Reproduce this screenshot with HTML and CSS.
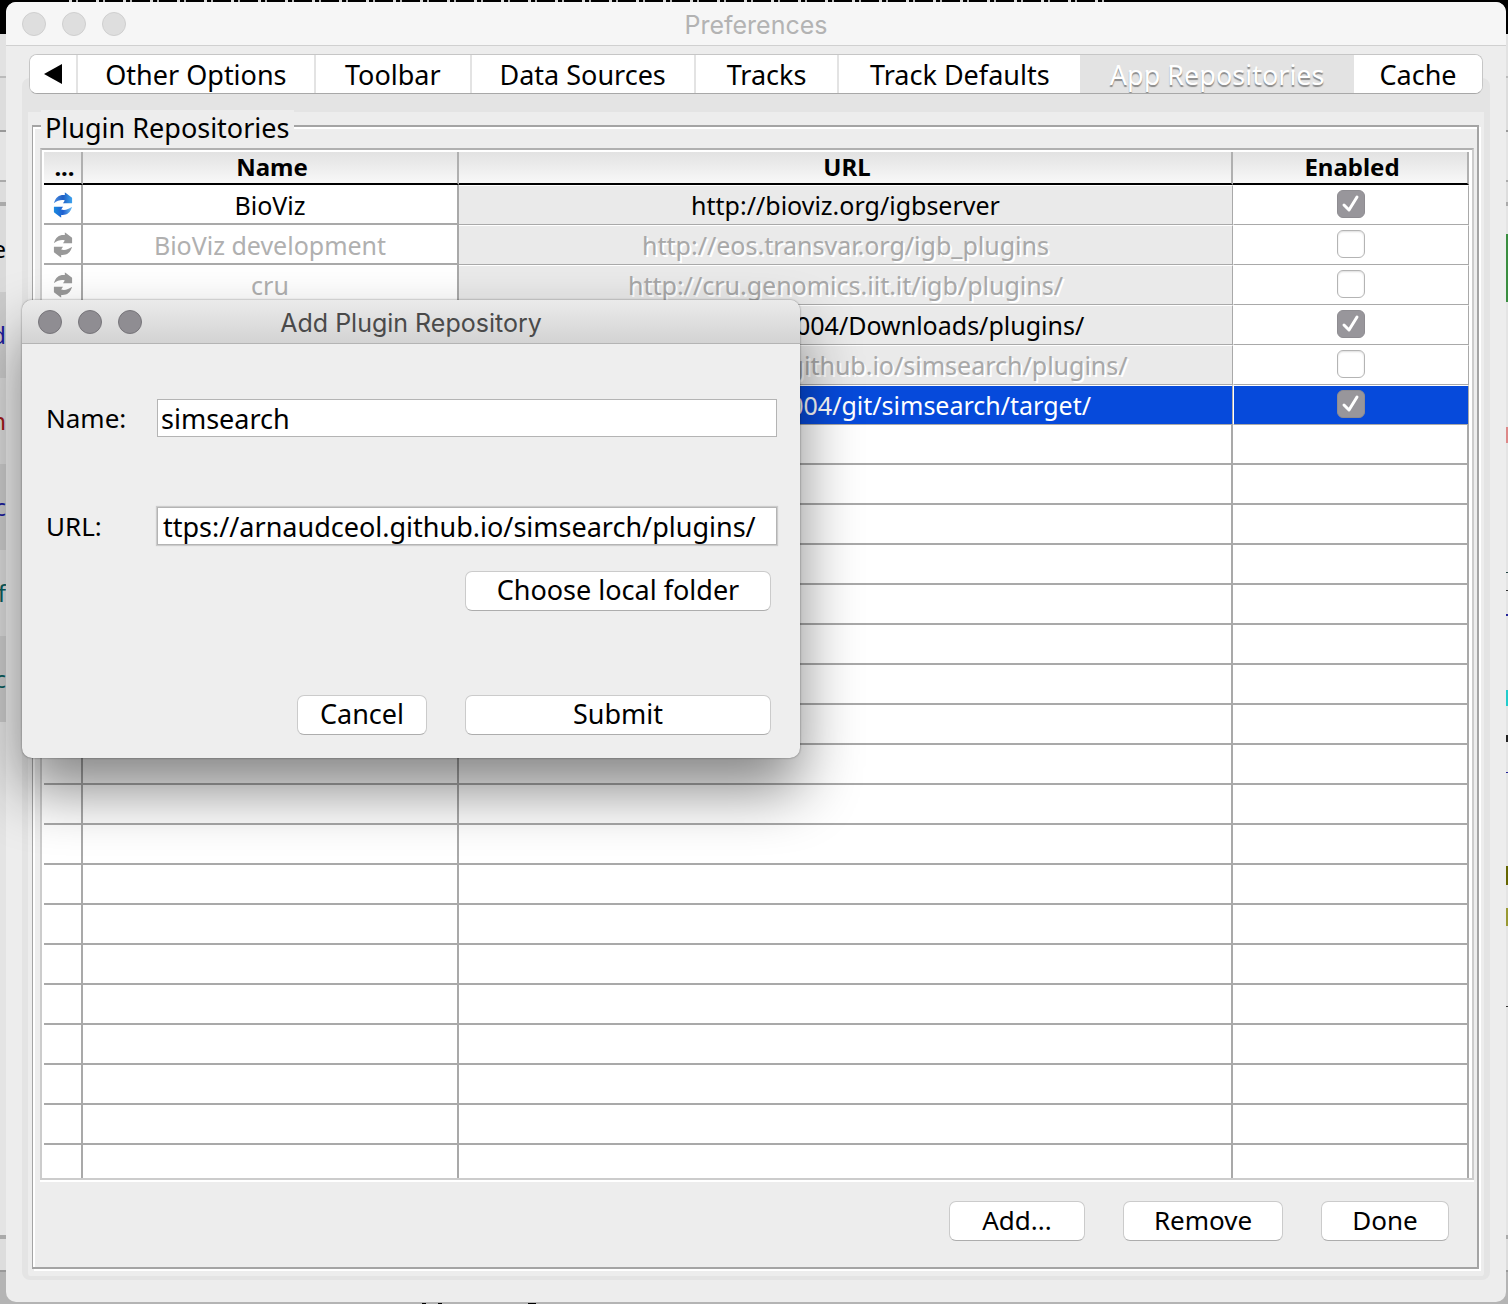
FILE: index.html
```html
<!DOCTYPE html>
<html lang="en">
<head>
<meta charset="utf-8">
<title>Preferences</title>
<link rel="stylesheet" href="styles.css">
</head>
<body>
<svg class="defs" aria-hidden="true">
  <defs>
    <linearGradient id="top-blue"><stop offset="0" stop-color="#4a8be0"/><stop offset=".5" stop-color="#1f5fc4"/><stop offset="1" stop-color="#3da3ee"/></linearGradient>
    <linearGradient id="low-blue"><stop offset="0" stop-color="#1a8be0"/><stop offset=".5" stop-color="#1f5fd0"/><stop offset="1" stop-color="#6fc0f4"/></linearGradient>
    <symbol id="sync-top" viewBox="0 0 22 28"><path d="M1 12C3 5 7 2.500 13 3V0L21 6V12H11L13 9C9 8 5 9 1 12Z"/></symbol>
    <symbol id="sync-low" viewBox="0 0 22 28"><path d="M21 16C19 23 15 25.500 9 25V28L1 22V16H11L9 19C13 20 17 19 21 16Z"/></symbol>
  </defs>
</svg>

<div class="desktop">
  <div class="behind-left" aria-hidden="true">
    <span>e</span><span class="blue">d</span><span class="red">n</span><span class="blue">c</span><span class="teal">of</span><span class="teal picked">c</span>
  </div>
  <div class="behind-right" aria-hidden="true"></div>

  <main class="window">
    <header class="titlebar">
      <span class="lights"><i></i><i></i><i></i></span>
      <h1>Preferences</h1>
    </header>

    <nav class="tabs">
      <button type="button" aria-label="Previous tabs"><svg class="arrow" viewBox="0 0 18 20"><path d="M0 10 18 0V20Z"/></svg></button>
      <button type="button">Other Options</button>
      <button type="button">Toolbar</button>
      <button type="button">Data Sources</button>
      <button type="button">Tracks</button>
      <button type="button">Track Defaults</button>
      <button type="button" class="current">App Repositories</button>
      <button type="button">Cache</button>
    </nav>

    <div class="pane">
      <section class="group">
        <h2>Plugin Repositories</h2>
        <div class="scroll">
          <table>
            <colgroup><col class="c-sync"><col class="c-name"><col class="c-url"><col class="c-on"></colgroup>
            <thead><tr><th>...</th><th>Name</th><th>URL</th><th>Enabled</th></tr></thead>
            <tbody>
              <tr class="row"><td><svg class="sync" viewBox="0 0 22 28"><use href="#sync-top"/><use class="low" href="#sync-low"/></svg></td><td>BioViz</td><td class="url">http://bioviz.org/igbserver</td><td class="on"><input type="checkbox" aria-label="Enable BioViz" checked></td></tr>
              <tr class="row off"><td><svg class="sync" viewBox="0 0 22 28"><use href="#sync-top"/><use class="low" href="#sync-low"/></svg></td><td>BioViz development</td><td class="url">http://eos.transvar.org/igb_plugins</td><td class="on"><input type="checkbox" aria-label="Enable BioViz development"></td></tr>
              <tr class="row off"><td><svg class="sync" viewBox="0 0 22 28"><use href="#sync-top"/><use class="low" href="#sync-low"/></svg></td><td>cru</td><td class="url">http://cru.genomics.iit.it/igb/plugins/</td><td class="on"><input type="checkbox" aria-label="Enable cru"></td></tr>
              <tr class="row"><td></td><td></td><td class="url">file:/Users/aceol004/Downloads/plugins/</td><td class="on"><input type="checkbox" aria-label="Enable downloads folder" checked></td></tr>
              <tr class="row off"><td></td><td></td><td class="url">https://arnaudceol.github.io/simsearch/plugins/</td><td class="on"><input type="checkbox" aria-label="Enable simsearch"></td></tr>
              <tr class="row selected"><td></td><td></td><td class="url">file:/Users/aceol004/git/simsearch/target/</td><td class="on"><input type="checkbox" aria-label="Enable simsearch target folder" checked></td></tr>
              <tr><td></td><td></td><td></td><td></td></tr>
              <tr><td></td><td></td><td></td><td></td></tr>
              <tr><td></td><td></td><td></td><td></td></tr>
              <tr><td></td><td></td><td></td><td></td></tr>
              <tr><td></td><td></td><td></td><td></td></tr>
              <tr><td></td><td></td><td></td><td></td></tr>
              <tr><td></td><td></td><td></td><td></td></tr>
              <tr><td></td><td></td><td></td><td></td></tr>
              <tr><td></td><td></td><td></td><td></td></tr>
              <tr><td></td><td></td><td></td><td></td></tr>
              <tr><td></td><td></td><td></td><td></td></tr>
              <tr><td></td><td></td><td></td><td></td></tr>
              <tr><td></td><td></td><td></td><td></td></tr>
              <tr><td></td><td></td><td></td><td></td></tr>
              <tr><td></td><td></td><td></td><td></td></tr>
              <tr><td></td><td></td><td></td><td></td></tr>
              <tr><td></td><td></td><td></td><td></td></tr>
              <tr><td></td><td></td><td></td><td></td></tr>
              <tr><td></td><td></td><td></td><td></td></tr>
            </tbody>
          </table>
        </div>
        <div class="actions">
          <button type="button" class="btn add">Add...</button>
          <button type="button" class="btn remove">Remove</button>
          <button type="button" class="btn done">Done</button>
        </div>
      </section>
    </div>
  </main>

  <form class="dialog" role="dialog" aria-labelledby="dialog-title">
    <header class="titlebar">
      <span class="lights"><i></i><i></i><i></i></span>
      <h2 id="dialog-title">Add Plugin Repository</h2>
    </header>
    <div class="fields">
      <label for="name">Name:</label>
      <input id="name" type="text" value="simsearch">
      <label for="url">URL:</label>
      <input id="url" class="focus" type="text" value="ttps://arnaudceol.github.io/simsearch/plugins/">
    </div>
    <div class="buttons">
      <button type="button" class="btn wide">Choose local folder</button>
      <button type="button" class="btn cancel">Cancel</button>
      <button type="button" class="btn wide">Submit</button>
    </div>
  </form>
</div>
</body>
</html>
```
FILE: styles.css
```css
* { box-sizing: border-box; }

body {
  margin: 0;
  font-family: "Noto Sans", "Open Sans", sans-serif;
  font-size: 27px;
  color: #000;
}

button, input { font: inherit; color: inherit; margin: 0; }
h1, h2 { margin: 0; font-size: inherit; font-weight: 400; }
.defs { position: absolute; width: 0; height: 0; }

/* Desktop and the application showing round the window */
.desktop {
  position: relative;
  display: flex;
  height: 100vh;
  min-height: 800px;
  padding: 2px 2px 2px 6px;
  overflow: hidden;
  background:
    repeating-linear-gradient(90deg, #0000 0 9px, #ddd 9px 12px, #0000 12px 16px, #bbb 16px 18px, #0000 18px 27px) 60px 0 / 1046px 2px no-repeat,
    linear-gradient(#000, #000) 422px 100% / 4px 1px no-repeat,
    linear-gradient(#000, #000) 438px 100% / 4px 1px no-repeat,
    linear-gradient(#000, #000) 528px 100% / 8px 1px no-repeat,
    linear-gradient(#000 34px, #e2e2e2 34px 76px, #bbb 76px 78px, #ddd 78px 130px, #999 130px 132px, #e4e4e4 132px 180px, #aaa 180px 182px, #ddd 182px 202px, #aaa 202px 206px, #e4e4e4 206px 1235px, #aaa 1235px 1239px, #ddd 1239px 1270px, #999 1270px 1272px, #b4b4b4 1272px);
}

.behind-left {
  position: absolute;
  left: 0;
  top: 206px;
  width: 6px;
  overflow: hidden;
}
.behind-left span {
  display: flex;
  justify-content: flex-end;
  height: 86px;
  line-height: 86px;
  font-size: 24px;
  background: #dadada;
}
.behind-left span:nth-child(even) { background: #cbcbcb; }
.behind-left .blue { color: #1c1c9c; }
.behind-left .red { color: #a01818; }
.behind-left .teal { color: #0a5c5c; }
.behind-left .picked { background: #999; }

.behind-right {
  position: absolute;
  right: 0;
  top: 0;
  width: 2px;
  height: 100%;
  background: linear-gradient(#0000 234px, #3a8e40 234px 302px, #0000 302px 427px, #d88 427px 443px, #0000 443px 572px, #244 572px 573px, #0000 573px 590px, #333 590px 591px, #0000 591px 614px, #229 614px 616px, #0000 616px 690px, #2cc 690px 706px, #0000 706px 735px, #222 735px 742px, #0000 742px 772px, #229 772px 773px, #0000 773px 866px, #660 866px 885px, #0000 885px 908px, #993 908px 926px, #0000 926px 1006px, #333 1006px 1007px, #0000 1007px);
}

/* Windows */
.window {
  position: relative;
  display: flex;
  flex: 1;
  flex-direction: column;
  min-width: 0;
  padding-bottom: 22px;
  overflow: hidden;
  border-radius: 10px;
  background: #ededed;
}

.titlebar {
  display: grid;
  grid-template-columns: 1fr auto 1fr;
  align-items: center;
  height: 44px;
  flex: none;
  padding: 0 16px;
  border-bottom: 1px solid #d0d0d0;
  background: #f6f6f6;
  font-family: Inter, Roboto, sans-serif;
  font-size: 25px;
  line-height: 30px;
  color: #b3b3b3;
}
.titlebar h1, .titlebar h2 { padding-top: 2px; }
.lights { display: flex; gap: 16px; }
.lights i {
  width: 24px;
  height: 24px;
  border: 1px solid #cfcfcf;
  border-radius: 50%;
  background: #dedede;
}

/* Tabs */
.tabs {
  position: relative;
  z-index: 1;
  display: grid;
  grid-template-columns: 48px 238fr 156fr 224fr 144fr 243fr 272fr 128fr;
  height: 40px;
  flex: none;
  margin: 8px 23px -16px 23px;
  overflow: hidden;
  border: 1px solid #c6c6c6;
  border-bottom-color: #a8a8a8;
  border-radius: 8px;
  background: #fff;
}
.tabs button {
  display: flex;
  align-items: center;
  justify-content: center;
  min-width: 0;
  padding: 0;
  border: 0;
  border-right: 2px solid #e3e3e3;
  background: #fff;
  white-space: nowrap;
}
.tabs button:last-child { border-right: 0; }
.tabs .current { background: #e3e3e3; color: #fff; text-shadow: 0 2px 1px #8a8a8a; }
.arrow { width: 18px; height: 20px; }

.pane {
  display: flex;
  flex: 1;
  min-height: 0;
  margin: 0 16px;
  padding: 13px 5px 7px 4px;
  border: solid #e4e4e4;
  border-width: 34px 6px 4px;
  border-radius: 8px;
  background: #ededed;
}

.group {
  display: flex;
  flex: 1;
  flex-direction: column;
  min-width: 0;
  padding: 0 3px 26px 7px;
  border: 2px solid #a4a4a4;
  border-left-width: 1px;
  box-shadow: 2px 2px #fff, inset 2px 2px #fff;
}
.group h2 {
  align-self: flex-start;
  height: 38px;
  margin: -17px 0 0 1px;
  padding: 0 4px;
  line-height: 36px;
  background: #ededed;
}

.scroll {
  flex: 1;
  min-height: 0;
  overflow: hidden;
  padding: 2px 3px 0 2px;
  border: 2px solid #ccc;
  border-top-color: #b0b0b0;
  background: #fff;
  box-shadow: 0 2px #fff;
}

table {
  width: 100%;
  table-layout: fixed;
  border-spacing: 0;
  font-size: 25px;
  text-align: center;
}
.c-sync { width: 39px; }
.c-name { width: 376px; }
.c-on { width: 236px; }

th {
  height: 33px;
  padding: 0 0 2px 4px;
  border-right: 2px solid #b0b0b0;
  border-bottom: 2px solid #000;
  background: linear-gradient(#e2e2e2, #f8f8f8);
  font-size: 24px;
  line-height: 28px;
}
td {
  height: 40px;
  padding: 0;
  border-right: 2px solid #a9a9a9;
  border-bottom: 2px solid #a9a9a9;
  line-height: 36px;
  white-space: nowrap;
}
.row td:first-child, .row td:nth-child(2) { padding-top: 2px; }
.row .url, .row .on {
  border-width: 1px;
  border-style: solid;
  border-color: #fff #a9a9a9 #a9a9a9 #fff;
}
.row .on { padding-bottom: 2px; }
.row .url { border-left-width: 0; background: #eaeaea; }
.off td { color: #b0b0b0; }
.off .url { text-shadow: 2px 2px #fff; color: #a8a8a8; }
.row.selected td { background: #064adb; color: #fff; }
.sync { display: block; width: 20px; height: 26px; margin: 0 auto; fill: url(#top-blue); }
.sync .low { fill: url(#low-blue); }
.off .sync, .off .sync .low { fill: #999; }

input[type="checkbox"] {
  appearance: none;
  display: block;
  width: 28px;
  height: 28px;
  margin: 0 auto;
  border: 1px solid #b4b4b4;
  border-radius: 6px;
  background: #fff;
  box-shadow: inset 0 1px 2px #ddd;
}
input[type="checkbox"]:checked {
  border-color: #8e8c91;
  background: #98969b url("data:image/svg+xml,%3Csvg xmlns='http://www.w3.org/2000/svg' viewBox='0 0 26 26'%3E%3Cpath d='M6 14l5 5 8-13' fill='none' stroke='white' stroke-width='3' stroke-linecap='round' stroke-linejoin='round'/%3E%3C/svg%3E") center / 26px 26px no-repeat;
  box-shadow: none;
}

.btn {
  height: 40px;
  padding: 0 0 2px;
  border: 1px solid #cbcbcb;
  border-bottom-color: #adadad;
  border-radius: 7px;
  background: #fff;
  line-height: 36px;
  white-space: nowrap;
}
.actions {
  display: flex;
  justify-content: flex-end;
  gap: 38px;
  padding: 21px 25px 0 0;
  font-size: 26px;
}
.add { width: 136px; }
.remove { width: 160px; }
.done { width: 128px; }

/* Dialog floating over the preferences window */
.dialog {
  position: absolute;
  left: 22px;
  top: 300px;
  width: 778px;
  overflow: hidden;
  border-radius: 10px;
  background: #eee;
  box-shadow: 0 0 2px rgba(0, 0, 0, .5), 0 32px 60px rgba(0, 0, 0, .48);
}
.dialog .titlebar {
  border-bottom-color: #b4b4b4;
  background: linear-gradient(#ebebeb, #d3d3d3);
  color: #4a4a4a;
}
.dialog .lights i { border-color: #77757a; background: #8f8d92; }

.fields {
  display: grid;
  grid-template-columns: 111px 1fr;
  row-gap: 70px;
  align-items: center;
  padding: 55px 23px 0 24px;
}
.fields label { font-size: 26px; line-height: 36px; }
.fields input {
  width: 100%;
  height: 38px;
  padding: 0 3px;
  border: 1px solid #b4b4b4;
  background: #fff;
  outline: 0;
}
.fields .focus { padding: 0 5px; box-shadow: 0 0 1px 1px #ccc; }

.buttons {
  display: grid;
  grid-template-columns: 130px 306px;
  justify-content: end;
  column-gap: 38px;
  row-gap: 84px;
  padding: 26px 29px 23px 0;
}
.buttons .btn:first-child { grid-column: 2; }
```
